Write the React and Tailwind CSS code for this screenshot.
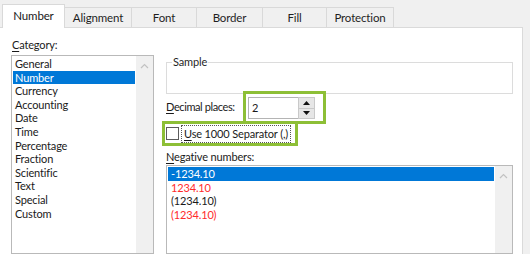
import React from 'react';

const TABS = [
  { label: 'Number', w: 'w-[63px]', active: true },
  { label: 'Alignment', w: 'w-[67px]' },
  { label: 'Font', w: 'w-[65px]' },
  { label: 'Border', w: 'w-[66px]' },
  { label: 'Fill', w: 'w-[64px]' },
  { label: 'Protection', w: 'w-[67px]' },
];

const CATEGORIES = [
  'General', 'Number', 'Currency', 'Accounting', 'Date', 'Time',
  'Percentage', 'Fraction', 'Scientific', 'Text', 'Special', 'Custom',
];

const NEGATIVES = [
  { text: '-1234.10', selected: true },
  { text: '1234.10', red: true },
  { text: '(1234.10)' },
  { text: '(1234.10)', red: true },
];

function ChevronUp() {
  return (
    <svg width="9" height="6" viewBox="0 0 9 6" className="mx-auto">
      <path d="M1 5 L4.5 1.5 L8 5" fill="none" stroke="#c2c2c2" strokeWidth="1.2" />
    </svg>
  );
}

function Scrollbar() {
  return (
    <div className="w-[17px] bg-[#f0f0f0] pt-[7px]">
      <ChevronUp />
    </div>
  );
}

function Spinner() {
  return (
    <div className="flex flex-col w-[17px] h-[22px] bg-[#e6e6e6] border border-[#c9c9c9]">
      <div className="flex-1 flex items-center justify-center border-b border-[#c9c9c9]">
        <svg width="7" height="4" viewBox="0 0 7 4"><path d="M0 4 L3.5 0 L7 4 Z" fill="#111" /></svg>
      </div>
      <div className="flex-1 flex items-center justify-center">
        <svg width="7" height="4" viewBox="0 0 7 4"><path d="M0 0 L3.5 4 L7 0 Z" fill="#111" /></svg>
      </div>
    </div>
  );
}

export default function App() {
  return (
    <div
      className="w-[530px] h-[254px] overflow-hidden bg-[#f0f0f0] flex flex-col text-[11px] tracking-[-0.15px] text-[#1a1a1a] whitespace-nowrap"
      style={{ fontFamily: 'Lato, "Noto Sans", sans-serif' }}
    >
      {/* tab strip */}
      <div className="flex items-end h-[27px] pl-[2px] shrink-0 text-[11.5px]">
        {TABS.map((t) =>
          t.active ? (
            <div
              key={t.label}
              className={`${t.w} h-[24px] -mb-px relative z-10 bg-white border-t border-l border-r border-[#d9d9d9] flex items-center justify-center pb-[2px]`}
            >
              {t.label}
            </div>
          ) : (
            <div
              key={t.label}
              className={`${t.w} h-[20px] border-t border-r border-[#d9d9d9] flex items-center justify-center text-[#1f1f1f]`}
            >
              {t.label}
            </div>
          )
        )}
      </div>

      {/* panel */}
      <div className="w-[523px] flex-1 bg-white border-t border-r border-[#dadada] flex pl-[11px] min-h-0">
        {/* category column */}
        <div className="w-[143px] flex flex-col">
          <div className="mt-[10px] h-[14px] leading-[14px] pl-px">
            <span className="underline underline-offset-2">C</span>ategory:
          </div>
          <div className="mt-[3px] flex-1 border border-[#b9b9b9] flex min-h-0">
            <div className="flex-1 p-px">
              {CATEGORIES.map((c, i) => (
                <div
                  key={c}
                  className={`h-[13.6px] leading-[13.6px] pl-[2px] ${
                    i === 1 ? 'bg-[#0078d7] text-white' : ''
                  }`}
                >
                  {c}
                </div>
              ))}
            </div>
            <Scrollbar />
          </div>
        </div>

        {/* settings column */}
        <div className="ml-[12px] w-[347px] flex flex-col">
          <fieldset className="mt-[27px] h-[39px] border border-[#dcdcdc] px-[5px]">
            <legend className="px-px leading-[14px] text-[#1f1f1f]">Sample</legend>
          </fieldset>

          <div className="flex items-center -mt-[3px]">
            <div className="w-[77px] tracking-[-0.4px]">
              <span className="underline underline-offset-2">D</span>ecimal places:
            </div>
            <div className="w-[83px] h-[33px] border-[3px] border-[#8dbf36] pl-[2px] pt-[3px] flex">
              <div className="w-[50px] h-[22px] border border-[#b4b4b4] border-r-0 pl-[3px] leading-[20px]">
                2
              </div>
              <Spinner />
            </div>
          </div>

          <div className="-mt-[3px] -ml-[4px] w-[136px] h-[25px] border-[3px] border-[#8dbf36] flex items-center">
            <div className="ml-px w-[13px] h-[13px] border border-[#5c5c5c] bg-white shrink-0" />
            <div className="ml-[2px] px-[2px] h-[18px] leading-[16px] border border-dotted border-[#555]">
              <span className="underline underline-offset-2">U</span>se 1000 Separator (,)
            </div>
          </div>

          <div className="mt-[4px] h-[14px] leading-[14px]">
            <span className="underline underline-offset-2">N</span>egative numbers:
          </div>
          <div className="mt-px flex-1 border border-[#b9b9b9] flex min-h-0">
            <div className="flex-1 p-px">
              {NEGATIVES.map((n, i) => (
                <div
                  key={i}
                  className={`h-[13.6px] leading-[13.6px] pl-[3px] ${
                    n.selected ? 'bg-[#0078d7] text-white' : n.red ? 'text-[#ff2b2b]' : ''
                  }`}
                >
                  {n.text}
                </div>
              ))}
            </div>
            <Scrollbar />
          </div>
        </div>
      </div>
    </div>
  );
}
